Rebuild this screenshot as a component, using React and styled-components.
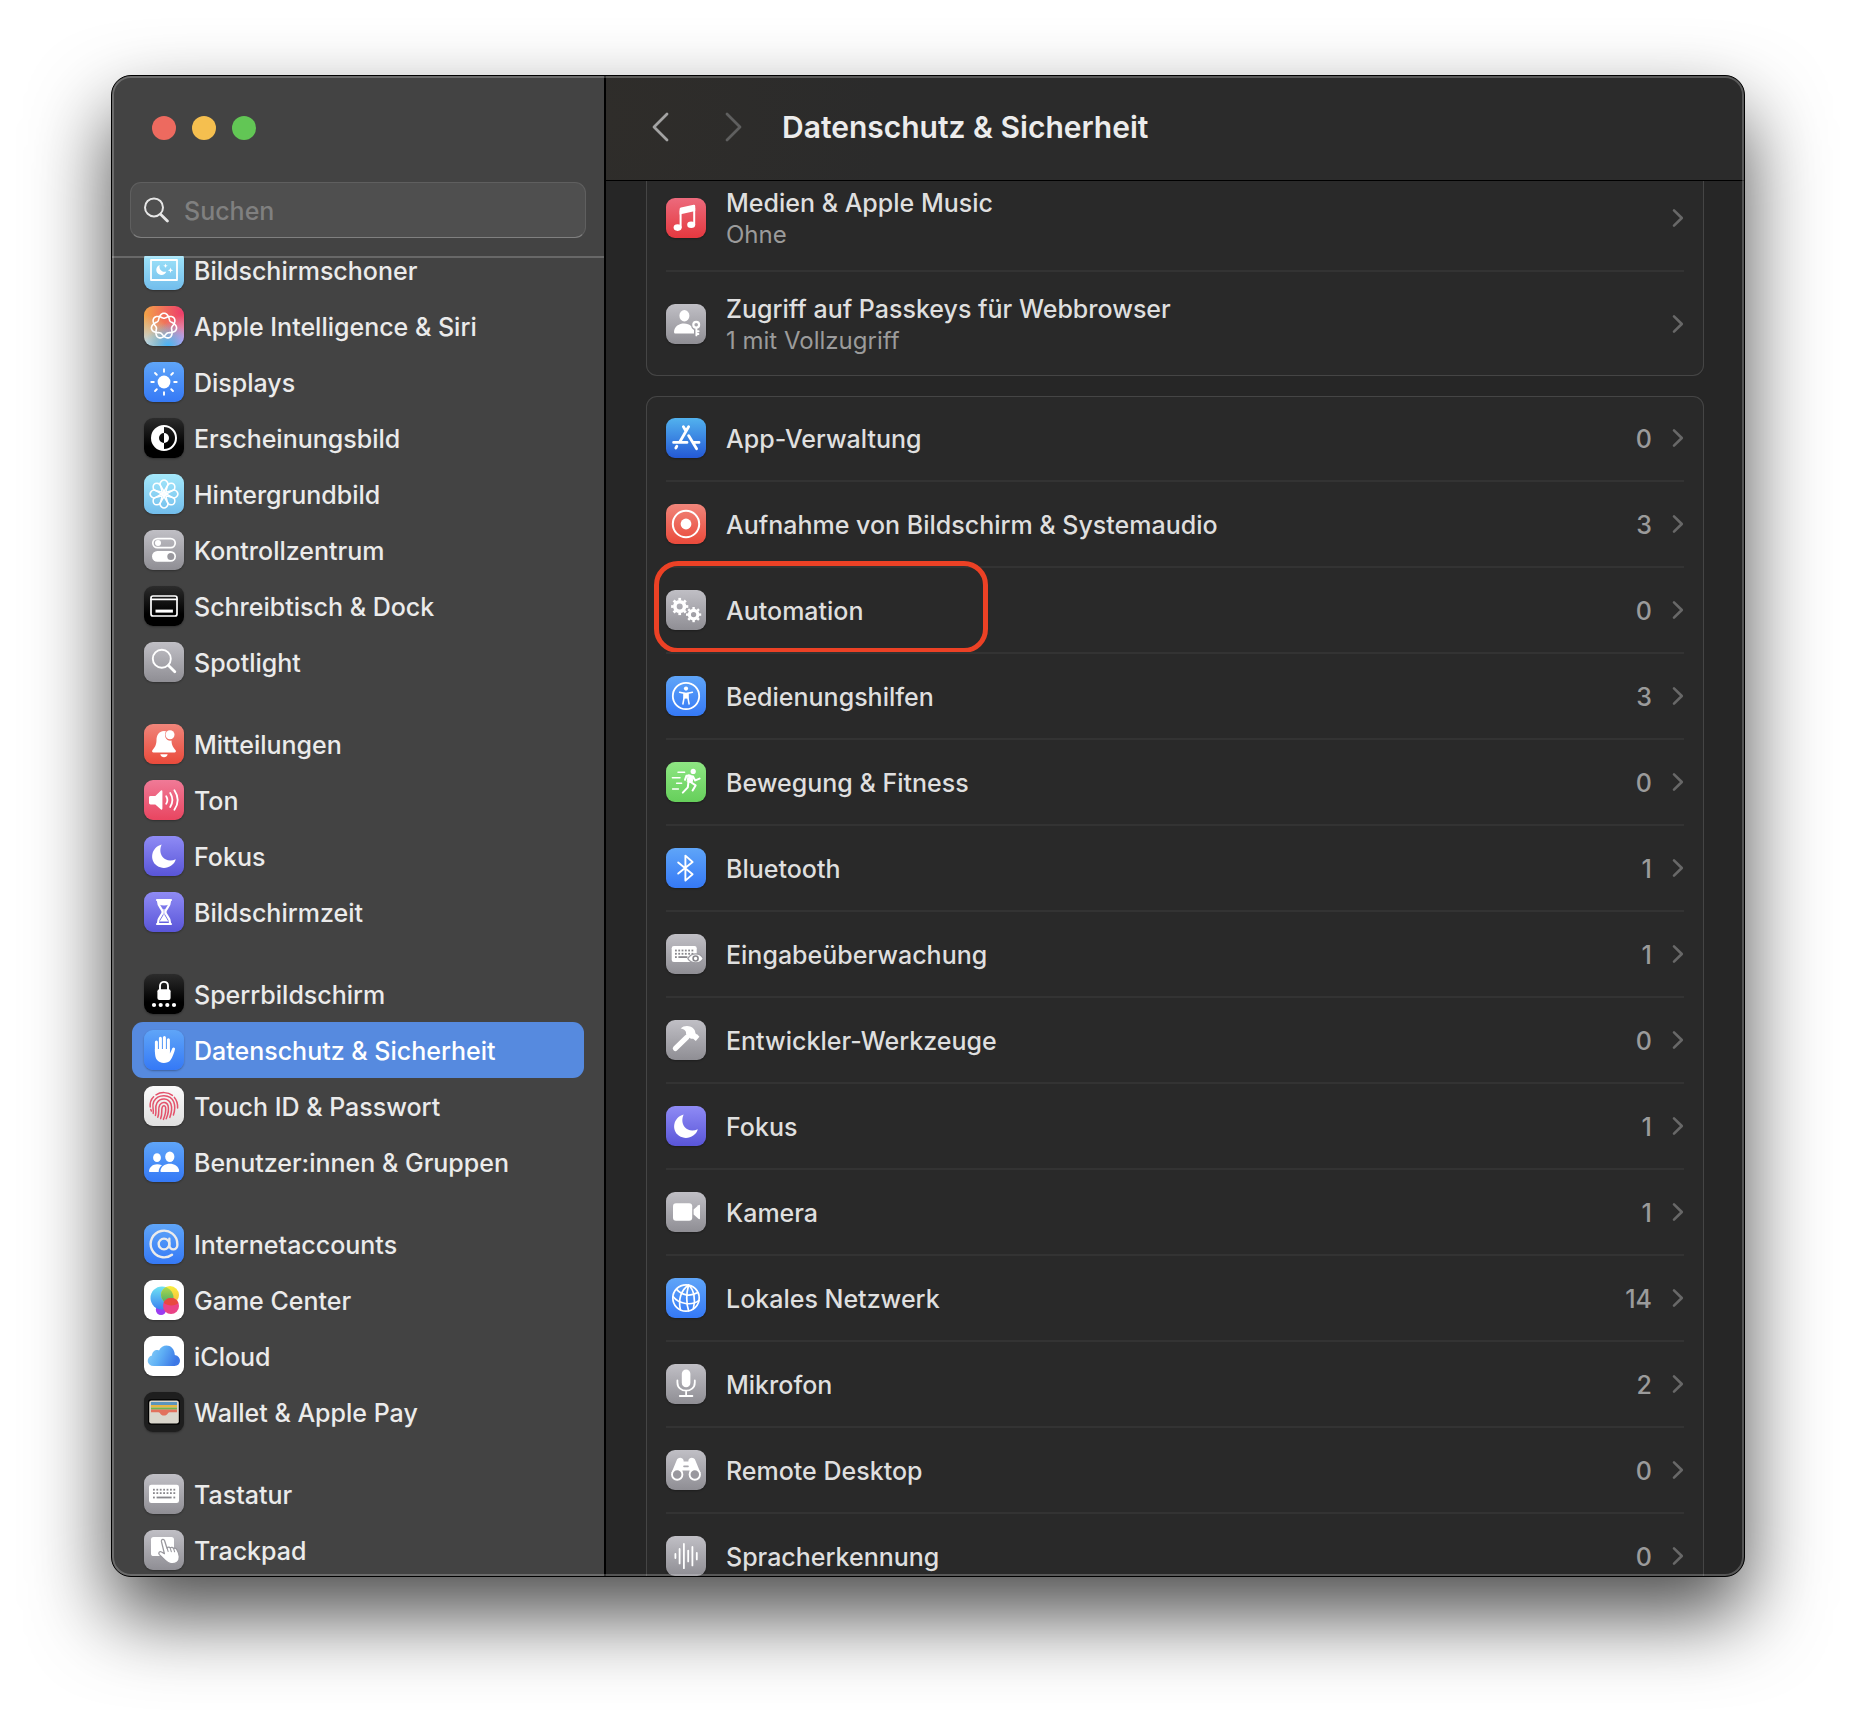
import React from "react";
import styled, { createGlobalStyle, ThemeProvider } from "styled-components";
import { AtSign } from "lucide-react";
import { IoFingerPrint } from "react-icons/io5";

const theme = {
  color: {
    sidebar: "#434343",
    header: "#2b2b2b",
    content: "#262626",
    card: "#292929",
    cardBorder: "#454545",
    divider: "#333333",
    selected: "#568adf",
    marker: "#ec4125",
    text: {
      sidebar: "#ebebeb",
      main: "#dfdfdf",
      secondary: "#9b9b9b",
      placeholder: "#808080",
      white: "#ffffff"
    }
  },
  font: `Inter, "Liberation Sans", sans-serif`
};

const tints = {
  blue: "linear-gradient(#5fa5f8, #3579f6)",
  sky: "linear-gradient(#a5e9fb, #72bdec)",
  gray: "linear-gradient(#c0bfc5, #8f8e94)",
  black: "linear-gradient(#2c2c2c, #000000 70%)",
  red: "linear-gradient(#f0857a, #ea4a3b)",
  pink: "linear-gradient(#f07a97, #e94560)",
  music: "linear-gradient(#ec6a7c, #e5383f)",
  indigo: "linear-gradient(#8f8bf5, #5955d8)",
  green: "linear-gradient(#8ee683, #66cf5b)",
  store: "linear-gradient(#52b2ee, #2459d6)",
  light: "linear-gradient(#fbfbfb, #dfdfdf)",
  white: "#ffffff",
  wallet: "#1e1e1e",
  siri:
    "radial-gradient(circle at 60% 100%, #45b4f8, transparent 50%), radial-gradient(circle at 0% 100%, #b9dcf2, transparent 55%), radial-gradient(circle at 100% 90%, #d49bfa, transparent 50%), radial-gradient(circle at 95% 15%, #ee3d6c, transparent 75%), #f3a547"
};

const GlobalStyle = createGlobalStyle`
  * {
    box-sizing: border-box;
  }

  body {
    margin: 0;
    background: #ffffff;
    font-family: ${theme.font};
    font-size: 25px;
    font-weight: 500;
  }
`;

const Desktop = styled("div")`
  display: flex;
  height: 100vh;
  min-height: 600px;
  padding: 75px 111px 147px;
`;

const Window = styled("main")(
  ({ theme }) => `
  position: relative;
  display: flex;
  flex: 1;
  min-width: 0;
  overflow: hidden;
  border: 1px solid #000000;
  border-radius: 20px;
  background: ${theme.color.content};
  box-shadow: 0 38px 80px rgba(0, 0, 0, 0.7);

  &::after {
    content: "";
    position: absolute;
    inset: 0;
    border: 2px solid rgba(255, 255, 255, 0.22);
    border-radius: 19px;
    pointer-events: none;
  }
`
);

const Sidebar = styled("nav")(
  ({ theme }) => `
  display: flex;
  flex-direction: column;
  flex: none;
  width: 494px;
  border-right: 2px solid #000000;
  background: ${theme.color.sidebar};
`
);

const TrafficLights = styled("div")`
  display: flex;
  gap: 16px;
  padding: 40px 40px 42px;
`;

const TrafficLight = styled("button")(
  ({ tint }) => `
  width: 24px;
  height: 24px;
  padding: 0;
  border: 0;
  border-radius: 50%;
  background: ${tint};
`
);

const SearchField = styled("label")`
  display: flex;
  align-items: center;
  gap: 15px;
  height: 56px;
  margin: 0 18px 18px;
  padding: 0 13px;
  border: 1px solid #5f5f5f;
  border-bottom-color: #808080;
  border-radius: 11px;
  background: #4f4f4f;
`;

const SearchInput = styled("input")(
  ({ theme }) => `
  flex: 1;
  min-width: 0;
  padding: 2px 0 0;
  border: 0;
  outline: 0;
  background: transparent;
  color: ${theme.color.text.sidebar};
  font: inherit;

  &::placeholder {
    color: ${theme.color.text.placeholder};
    opacity: 1;
  }
`
);

const SidebarScroll = styled("div")`
  position: relative;
  flex: 1;
  min-height: 0;
  overflow: hidden;

  &::before {
    content: "";
    position: absolute;
    z-index: 1;
    top: 0;
    left: 0;
    right: 0;
    height: 2px;
    background: rgba(255, 255, 255, 0.2);
  }
`;

const SidebarGroups = styled("div")`
  display: flex;
  flex-direction: column;
  gap: 26px;
  margin-top: -14px;
  padding: 0 20px;
`;

const List = styled("ul")`
  margin: 0;
  padding: 0;
  list-style: none;
`;

const SidebarLink = styled("a")(
  ({ theme, $selected }) => `
  display: flex;
  align-items: center;
  gap: 10px;
  height: 56px;
  padding: 0 12px;
  border-radius: 11px;
  background: ${$selected ? theme.color.selected : "transparent"};
  color: ${$selected ? theme.color.text.white : theme.color.text.sidebar};
  text-decoration: none;
  white-space: nowrap;
`
);

const SidebarLabel = styled("span")`
  padding-top: 2px;
  line-height: 32px;
`;

const Tile = styled("span")(
  ({ $tint }) => `
  flex: none;
  width: 40px;
  height: 40px;
  border-radius: 9px;
  background: ${tints[$tint]};
  box-shadow: 0 1px 2px rgba(0, 0, 0, 0.3);

  svg {
    display: block;
  }
`
);

const Pane = styled("section")`
  display: flex;
  flex-direction: column;
  flex: 1;
  min-width: 0;
`;

const Header = styled("header")(
  ({ theme }) => `
  display: flex;
  align-items: center;
  gap: 32px;
  flex: none;
  height: 105px;
  padding: 0 38px 2px;
  border-bottom: 1px solid #000000;
  background: radial-gradient(circle at 0 40%, #2f2d2a, ${theme.color.header} 280px);
`
);

const HeaderNav = styled("div")`
  display: flex;
  gap: 42px;
`;

const NavButton = styled("button")`
  display: flex;
  align-items: center;
  justify-content: center;
  width: 32px;
  height: 48px;
  padding: 0;
  border: 0;
  background: none;
  color: #a3a3a3;

  &:disabled {
    color: #5f5f5f;
  }
`;

const Title = styled("h1")`
  margin: 0;
  color: #ececec;
  font-size: 30px;
  font-weight: 600;
  white-space: nowrap;
`;

const PaneScroll = styled("div")`
  flex: 1;
  min-height: 0;
  overflow: hidden;
`;

const Cards = styled("div")`
  display: flex;
  flex-direction: column;
  gap: 20px;
  margin-top: -15px;
  padding: 0 40px;
`;

const Card = styled(List)(
  ({ theme }) => `
  padding: 0 20px;
  border-radius: 11px;
  background: ${theme.color.card};
  box-shadow: inset 0 0 0 1px ${theme.color.cardBorder};
`
);

const CardItem = styled("li")(
  ({ theme }) => `
  position: relative;

  & + & {
    border-top: 2px solid ${theme.color.divider};
  }
`
);

const RowButton = styled("button")(
  ({ theme, $tall }) => `
  display: flex;
  align-items: center;
  gap: 20px;
  width: 100%;
  height: ${$tall ? 104 : 84}px;
  padding: 0;
  border: 0;
  background: none;
  color: ${theme.color.text.main};
  font: inherit;
  text-align: left;
`
);

const RowText = styled("span")`
  display: flex;
  flex-direction: column;
  flex: 1;
  min-width: 0;
  padding-top: 2px;
  line-height: 32px;
`;

const RowDetail = styled("span")(
  ({ theme }) => `
  color: ${theme.color.text.secondary};
  font-size: 24px;
  font-weight: 400;
`
);

const RowCount = styled("span")(
  ({ theme }) => `
  padding-top: 2px;
  color: ${theme.color.text.secondary};
  line-height: 32px;
`
);

const Marker = styled("span")(
  ({ theme }) => `
  position: absolute;
  top: -7px;
  bottom: -1px;
  left: -12px;
  width: 334px;
  border: 5px solid ${theme.color.marker};
  border-radius: 24px;
  pointer-events: none;
`
);

const around = (count, draw) =>
  Array.from({ length: count }, (_, i) => draw((i * 360) / count));

// two strands weaving around a ring, seven lobes in total
const knotPath = () => {
  const steps = 280;
  const points = Array.from({ length: steps }, (_, i) => {
    const t = (i / steps) * Math.PI * 4;
    const r = 10.3 + 2.5 * Math.cos(3.5 * t);
    const x = 20 + r * Math.sin(t);
    const y = 20 - r * Math.cos(t);
    return `${x.toFixed(2)} ${y.toFixed(2)}`;
  });
  return `M${points.join("L")}Z`;
};

const Gear = ({ x, y, r }) => (
  <g transform={`translate(${x} ${y})`}>
    <circle r={r * 0.56} fill="none" strokeWidth={r * 0.42} />
    {around(8, angle => (
      <path
        key={angle}
        d={`M0 ${-r * 0.7}V${-r}`}
        strokeWidth={r * 0.32}
        strokeLinecap="butt"
        transform={`rotate(${angle})`}
      />
    ))}
  </g>
);

const Keys = ({ x, y, columns, rows, step }) =>
  Array.from({ length: columns * rows }, (_, i) => (
    <rect
      key={i}
      x={x + (i % columns) * step}
      y={y + Math.floor(i / columns) * step}
      width="1.8"
      height="1.8"
      fill="#88878c"
      stroke="none"
    />
  ));

const moon =
  "M17.6 8.6C7 11.5 5.2 24.5 13 29.8C20 34.4 29.6 31 31.8 23.2C27 25.4 21.6 24.8 18.6 21C15.8 17.4 15.8 13 17.6 8.6Z";

const glyphs = {
  screensaver: (
    <>
      <rect x="7" y="10" width="26" height="20" fill="none" strokeWidth="1.8" />
      <path
        d="M15.7 15C11.5 16.5 11.3 21.8 14.5 24C17.6 26 21.3 24.6 22.3 21.5C18 23 14.5 19 15.7 15Z"
        stroke="none"
      />
      <path
        d="M21.5 13.5l.6 1.7 1.7.6-1.7.6-.6 1.7-.6-1.7-1.7-.6 1.7-.6zM26.5 17.5l.7 2 2 .7-2 .7-.7 2-.7-2-2-.7 2-.7z"
        stroke="none"
      />
    </>
  ),
  siri: <path d={knotPath()} fill="none" strokeWidth="1.6" />,
  sun: (
    <>
      <circle cx="20" cy="20" r="6.4" stroke="none" />
      {around(8, angle => (
        <path
          key={angle}
          d="M20 7.3V9.8"
          strokeWidth="1.9"
          transform={`rotate(${angle} 20 20)`}
        />
      ))}
    </>
  ),
  appearance: (
    <>
      <circle cx="20" cy="20" r="12" fill="none" strokeWidth="2" />
      <path d="M20 8A12 12 0 0 0 20 32V25A5 5 0 0 1 20 15Z" stroke="none" />
      <path d="M20 15A5 5 0 0 1 20 25Z" stroke="none" />
    </>
  ),
  flower: (
    <g fill="none" strokeWidth="1.5">
      {around(8, angle => (
        <path
          key={angle}
          d="M20.9 19L16.9 12.2A3.8 3.8 0 1 1 23.1 12.2L19.1 19"
          transform={`rotate(${angle} 20 20)`}
        />
      ))}
    </g>
  ),
  toggles: (
    <>
      <rect x="8.8" y="8.6" width="22.4" height="9" rx="4.5" fill="none" strokeWidth="1.7" />
      <circle cx="14" cy="13.1" r="3" stroke="none" />
      <rect x="8" y="21" width="24" height="10.8" rx="5.4" stroke="none" />
      <circle cx="26.8" cy="26.4" r="3.5" fill="#99989e" stroke="none" />
    </>
  ),
  dock: (
    <>
      <rect x="7" y="10" width="26" height="20" rx="2" fill="none" strokeWidth="1.7" />
      <path d="M7 13.3H33" strokeWidth="1.7" />
      <rect x="11.5" y="23.6" width="17.4" height="3" stroke="none" />
    </>
  ),
  magnifier: (
    <>
      <circle cx="17.8" cy="16.8" r="9" fill="none" strokeWidth="1.9" />
      <path d="M24.5 23.5L30.8 29.8" strokeWidth="2.8" />
    </>
  ),
  bell: (
    <>
      <path
        d="M20 7C14.5 7.4 12.6 11.4 12.5 16C12.4 21.5 10.5 23.5 8.4 26.2C7.7 27.4 8.2 28.5 9.5 28.5H30.5C31.8 28.5 32.3 27.4 31.6 26.2C29.4 23.6 27.6 21.5 27.5 16.5C23 17.5 19 12.5 22 7.2Z"
        stroke="none"
      />
      <path d="M16.3 30.2H23.7C23 34.2 17 34.2 16.3 30.2Z" stroke="none" />
      <circle cx="26" cy="10.8" r="4.5" stroke="none" />
    </>
  ),
  sound: (
    <>
      <path
        d="M5 17.3Q5 16 6.5 16H11.3L17 10.6Q18.4 9.8 18.4 11.5V28.6Q18.4 30.3 17 29.4L11.3 24.4H6.5Q5 24.4 5 23Z"
        stroke="none"
      />
      <path
        d="M22.2 16.2Q24.6 20 22.2 23.8M26.2 13Q30.6 20 26.2 27M30.4 10.2Q37 20 30.4 29.8"
        fill="none"
        strokeWidth="1.8"
      />
    </>
  ),
  moon: <path d={moon} stroke="none" />,
  hourglass: (
    <>
      <path
        d="M13 8H27M13 32H27M14 9C14 15.5 18.6 16.5 18.6 20C18.6 23.5 14 24.5 14 31M26 9C26 15.5 21.4 16.5 21.4 20C21.4 23.5 26 24.5 26 31"
        fill="none"
        strokeWidth="2.2"
      />
      <path d="M14 8H26L25 12.5Q20 14.5 15 12.5ZM19.5 17H20.5V23L24.4 29.4H15.6L19.5 23Z" stroke="none" />
    </>
  ),
  lock: (
    <>
      <rect x="13.4" y="15.3" width="13.2" height="10.8" rx="2" stroke="none" />
      <path d="M16 16V12C16 6.5 24 6.5 24 12V16" fill="none" strokeWidth="1.9" />
      {[10, 16.7, 23.3, 30].map(cx => (
        <circle key={cx} cx={cx} cy="31" r="2.1" stroke="none" />
      ))}
    </>
  ),
  hand: (
    <>
      <path d="M12.4 12V22M16.4 8.2V20M20.4 7.4V20M24.4 9.8V21" strokeWidth="3" />
      <path
        d="M10.9 19H25.9V23.5C27 21.6 27.6 19.6 28.3 18.2C29.2 16.7 31.4 17.4 31 19.2C30.2 22.5 28.6 27.2 26.4 30.2C23.6 33.9 15.6 34 12.7 29.6C11.3 27.4 10.9 24.5 10.9 19Z"
        stroke="none"
      />
    </>
  ),
  // ridges of the print, from the outer arc to the core
  fingerprint: (
    <g fill="none" stroke="#e4526b" strokeWidth="1.5">
      <path d="M12 8.8C17 5.6 24 6 28.4 9.4M30.4 11.4C33 14.4 33.8 18 33.6 22M9.6 10.8C6.8 13.6 5.8 17 6.2 21M6.8 23.4L7.4 25" />
      <path d="M9.2 27.4C10 23 7.4 20 9.8 15.4C14 7.6 26.4 7.8 29.8 16C31.4 20.4 30.8 25 29.4 29" />
      <path d="M11.4 29.4C13 24.6 10.4 21 13 16.8C16.6 11.4 24.4 12 26.8 17.6C28.4 22.4 27.4 27.4 25.8 31.4" />
      <path d="M13.8 31.2C15.8 26.4 13.6 22.6 15.8 18.8C18.2 15.2 22.8 16 24 19.4C25.2 24 24 28.6 22.2 32.8" />
      <path d="M16.6 32.6C18.8 28 17 24.4 18.2 21.2C19 19 21.2 19.4 21.6 21.4C22.2 25.6 21 29.6 19.4 33.4" />
    </g>
  ),
  users: (
    <>
      <ellipse cx="13" cy="15.7" rx="3.9" ry="4.4" stroke="none" />
      <path d="M18 23.3C11.5 20.3 5.6 23.6 5 29C5 29.8 5.4 30 6 30H14.7C14.6 27.2 15.8 25 18 23.3Z" stroke="none" />
      <ellipse cx="25.8" cy="14.8" rx="4.6" ry="5.2" stroke="none" />
      <path d="M16.4 29C17.6 19.4 34 19.4 35.2 29Q35.2 30 34.2 30H17.4Q16.4 30 16.4 29Z" stroke="none" />
    </>
  ),
  at: <AtSign x="4" y="4" size={32} fill="none" strokeWidth={1.8} />,
  gameCenter: (
    <g stroke="none">
      <defs>
        <linearGradient id="gc-blue" x1="0" y1="0" x2="0" y2="1">
          <stop offset="0" stopColor="#6fe3f4" />
          <stop offset="1" stopColor="#3b82f0" />
        </linearGradient>
        <linearGradient id="gc-yellow" x1="0" y1="0" x2="0" y2="1">
          <stop offset="0" stopColor="#f9ee3d" />
          <stop offset="1" stopColor="#f4b73c" />
        </linearGradient>
        <linearGradient id="gc-green" x1="0" y1="0" x2="0" y2="1">
          <stop offset="0" stopColor="#b5dc4b" />
          <stop offset="1" stopColor="#44a868" />
        </linearGradient>
        <clipPath id="gc-clip">
          <circle cx="18" cy="18" r="11.5" />
        </clipPath>
      </defs>
      <circle cx="17" cy="29.7" r="5.2" fill="#9a3cf0" />
      <circle cx="18" cy="18" r="11.5" fill="url(#gc-blue)" />
      <circle cx="26" cy="15" r="9" fill="url(#gc-yellow)" />
      <circle cx="26" cy="15" r="9" fill="url(#gc-green)" clipPath="url(#gc-clip)" />
      <circle cx="27" cy="26" r="8" fill="#ea4386" />
      <path d="M19.6 22.8A8 8 0 0 1 34.4 23C31.5 26 24 26.5 19.6 22.8Z" fill="#e8483f" />
    </g>
  ),
  cloud: (
    <g stroke="none">
      <defs>
        <linearGradient id="cloud-fill" x1="0" y1="0" x2="1" y2="0.3">
          <stop offset="0" stopColor="#8fd3f7" />
          <stop offset="0.5" stopColor="#5fb0f5" />
          <stop offset="1" stopColor="#3d78e6" />
        </linearGradient>
      </defs>
      <path
        d="M10 30C2 30 2 20.6 8 19.4C8 15 12.2 13 15 14.4C19 6.4 30.6 8.4 30.8 19C38 20 37.6 30 30.5 30Z"
        fill="url(#cloud-fill)"
      />
    </g>
  ),
  wallet: (
    <g stroke="none">
      <rect x="4" y="7.3" width="32" height="25.4" rx="3" fill="#000000" />
      <rect x="5.2" y="8.6" width="29.6" height="22.8" rx="2.2" fill="#dad6cc" />
      <path d="M7 10H33V13H7Z" fill="#5b94bd" />
      <path d="M7 13H33V15.6H7Z" fill="#e9b543" />
      <path d="M7 15.6H33V17.6H7Z" fill="#6fb452" />
      <path d="M7 17.6H33V20.2H25.5C23.5 20.2 24 23.6 20 23.6C16 23.6 16.5 20.2 14.5 20.2H7Z" fill="#e2715d" />
    </g>
  ),
  keyboard: (
    <>
      <rect x="5" y="10.7" width="30" height="18.4" rx="2.4" stroke="none" />
      <Keys x={9} y={14.8} columns={7} rows={2} step={3.4} />
      <Keys x={9} y={22.6} columns={1} rows={1} step={3.4} />
      <rect x="12.6" y="22.6" width="15" height="1.8" fill="#88878c" stroke="none" />
      <Keys x={29.4} y={22.6} columns={1} rows={1} step={3.4} />
    </>
  ),
  trackpad: (
    <>
      <rect x="7" y="7" width="23" height="19" rx="2.6" stroke="none" />
      <path
        d="M17.4 11.4C17 9.2 20 8.6 20.6 10.8L23 18.2C24 16.6 25.6 17 26.2 18C27.4 16.8 29 17.4 29.6 18.6C31 17.6 32.6 18.4 33 20C35.6 24 36.6 30 33 32.2C29 35 24.4 33.6 21.6 30.6L15.4 24.6C13.8 22.6 15.8 20.8 17.6 22L20.4 23.6Z"
        stroke="#99989e"
        strokeWidth="1.3"
      />
      <path d="M23.2 18.4l.9 3M26.4 18.6l.9 3M29.8 19.2l.8 2.6" stroke="#99989e" strokeWidth="1.1" />
    </>
  ),
  music: (
    <>
      <path d="M13.6 11.3Q13.6 9.8 15 9.5L27.6 6.7Q29.2 6.5 29.2 8V13L13.6 16.4Z" stroke="none" />
      <path d="M14.6 13V29.4M28.2 10V26.6" strokeWidth="2" />
      <ellipse cx="11.6" cy="29.6" rx="4" ry="3.3" stroke="none" />
      <ellipse cx="25.2" cy="26.8" rx="4" ry="3.3" stroke="none" />
    </>
  ),
  passkey: (
    <>
      <ellipse cx="18.4" cy="11.8" rx="5" ry="5.7" stroke="none" />
      <path d="M8 28C8.4 18.6 21 17.6 25.2 22.2C25.4 24 26.6 25.2 28 26V29.6H9.2Q8 29.6 8 28Z" stroke="none" />
      <circle cx="30.2" cy="20.8" r="2.9" fill="none" strokeWidth="2.2" />
      <path d="M30.4 24V31.4M31 27.3H32.6M31 30H32.4" strokeWidth="1.9" />
    </>
  ),
  appStore: (
    <path
      d="M22.6 8.8L13.6 24.2M17.4 8.8L19.6 12.4M22.6 17.6L30.6 30.8M7.6 24.4H21M27 24.4H33M10.8 28.2L9.8 30"
      fill="none"
      strokeWidth="2.8"
    />
  ),
  record: (
    <>
      <circle cx="20" cy="20" r="13.2" fill="none" strokeWidth="2" />
      <circle cx="20" cy="20" r="5.4" stroke="none" />
    </>
  ),
  gears: (
    <>
      <Gear x={13.7} y={16.5} r={8.6} />
      <Gear x={27.6} y={24.6} r={7.6} />
    </>
  ),
  accessibility: (
    <>
      <circle cx="20" cy="20" r="13.2" fill="none" strokeWidth="1.8" />
      <circle cx="20" cy="12.6" r="2.1" stroke="none" />
      <path d="M13.6 16.3L18.2 17.2V21L16.9 28M26.4 16.3L21.8 17.2V21L23.1 28" fill="none" strokeWidth="1.5" />
      <path d="M17.4 16.6H22.6V22.6H17.4Z" stroke="none" />
    </>
  ),
  runner: (
    <>
      <circle cx="27.2" cy="9.4" r="2.6" stroke="none" />
      <path d="M22.4 13L27.4 14.2L26 20.6L21.6 20Z" strokeWidth="1" />
      <path
        d="M24 13.4L20.4 13.8L19 17.8M27 14.6L29.2 18.4L33.6 16.6M24.6 20L29.6 23.4L26.6 28.4M22.4 20.4L21.8 25.4L16.8 30.6"
        fill="none"
        strokeWidth="2"
      />
      <path d="M12 10.2H18.6M6.4 15.8H14M10.6 21.3H15.6M6.6 27H12.4" strokeWidth="1.5" />
    </>
  ),
  bluetooth: <path d="M12.2 14.4L26.6 26.2L19.4 32.6V7.6L26.6 14L12.2 25.6" fill="none" strokeWidth="1.9" />,
  keyboardEye: (
    <>
      <rect x="5.7" y="12" width="25" height="16" rx="2.2" stroke="none" />
      <Keys x={9} y={15.6} columns={6} rows={2} step={3.3} />
      <Keys x={9} y={22.2} columns={1} rows={1} step={3.3} />
      <rect x="12.4" y="22.2" width="9" height="1.8" fill="#88878c" stroke="none" />
      <path
        d="M21.8 24.6C25.6 18.4 34.2 18.4 37.2 24.6C34.2 30.2 25.6 30.2 21.8 24.6Z"
        stroke="#9b9aa0"
        strokeWidth="1.2"
      />
      <circle cx="29.6" cy="24.5" r="2.5" fill="none" stroke="#88878c" strokeWidth="1.6" />
    </>
  ),
  hammer: (
    <>
      <path d="M9.4 28.4L21 17.2" strokeWidth="5.2" />
      <path
        d="M14.6 8.6C18 5 25 5.4 28 9.2C29.6 11 28.8 12.8 30 14L31.4 14.4L33.4 16.8L29.8 21L27.2 18.8C26 18.6 24.4 18.8 23 17.4L20 14.2C20.6 11.4 18.6 9 14.6 8.6Z"
        stroke="none"
      />
    </>
  ),
  camera: (
    <>
      <rect x="7" y="11.2" width="19.2" height="17.6" rx="3" stroke="none" />
      <path d="M27.6 17.4L32.4 13.2Q34 12.2 34 13.8V26.2Q34 27.8 32.4 26.8L27.6 22.6Z" stroke="none" />
    </>
  ),
  globe: (
    <g fill="none" strokeWidth="1.7">
      <circle cx="20" cy="20" r="13.2" />
      <path d="M22.6 7C15 12 12 22 14.4 31.6M22.6 7C20.4 15 20.2 25 22.6 32.8M22.6 7C28 12 29.8 21 27.4 30.4" />
      <path d="M10.6 11.4C16 17.4 24 18.8 31.8 14.6M7 18.6C13 26.4 26 28 33 22.4" />
    </g>
  ),
  microphone: (
    <>
      <rect x="15.8" y="5.4" width="8.6" height="17.8" rx="4.3" stroke="none" />
      <path d="M11.4 16.4V18.4C11.4 29.4 28.8 29.4 28.8 18.4V16.4M20.1 27V32M13.8 32H26.4" fill="none" strokeWidth="1.8" />
    </>
  ),
  binoculars: (
    <>
      <path
        d="M5.4 23L10.6 10.4C11.4 7 17 7 17.6 10.4V11.4H22.4V10.4C23 7 28.6 7 29.4 10.4L34.6 23L23.6 26V20.4H16.4V26Z"
        stroke="none"
      />
      <path d="M18 16.4H22" stroke="#a9a8ae" strokeWidth="1.6" />
      <circle cx="11.2" cy="24.6" r="5.2" fill="#99989e" strokeWidth="1.9" />
      <circle cx="28.8" cy="24.6" r="5.2" fill="#99989e" strokeWidth="1.9" />
    </>
  ),
  waveform: (
    <path
      d="M9.4 18V22M13.6 13V27.4M17.9 8V32.2M22.2 14.6V25.4M26.4 11V29.4M30.8 16.8V23.4"
      strokeWidth="1.8"
    />
  )
};

const sidebarGroups = [
  [
    { label: "Bildschirmschoner", icon: "screensaver", tint: "sky" },
    { label: "Apple Intelligence & Siri", icon: "siri", tint: "siri" },
    { label: "Displays", icon: "sun", tint: "blue" },
    { label: "Erscheinungsbild", icon: "appearance", tint: "black" },
    { label: "Hintergrundbild", icon: "flower", tint: "sky" },
    { label: "Kontrollzentrum", icon: "toggles", tint: "gray" },
    { label: "Schreibtisch & Dock", icon: "dock", tint: "black" },
    { label: "Spotlight", icon: "magnifier", tint: "gray" }
  ],
  [
    { label: "Mitteilungen", icon: "bell", tint: "red" },
    { label: "Ton", icon: "sound", tint: "pink" },
    { label: "Fokus", icon: "moon", tint: "indigo" },
    { label: "Bildschirmzeit", icon: "hourglass", tint: "indigo" }
  ],
  [
    { label: "Sperrbildschirm", icon: "lock", tint: "black" },
    { label: "Datenschutz & Sicherheit", icon: "hand", tint: "blue", selected: true },
    { label: "Touch ID & Passwort", icon: "fingerprint", tint: "light" },
    { label: "Benutzer:innen & Gruppen", icon: "users", tint: "blue" }
  ],
  [
    { label: "Internetaccounts", icon: "at", tint: "blue" },
    { label: "Game Center", icon: "gameCenter", tint: "white" },
    { label: "iCloud", icon: "cloud", tint: "white" },
    { label: "Wallet & Apple Pay", icon: "wallet", tint: "wallet" }
  ],
  [
    { label: "Tastatur", icon: "keyboard", tint: "gray" },
    { label: "Trackpad", icon: "trackpad", tint: "gray" }
  ]
];

const cards = [
  [
    { label: "Medien & Apple Music", detail: "Ohne", icon: "music", tint: "music" },
    {
      label: "Zugriff auf Passkeys für Webbrowser",
      detail: "1 mit Vollzugriff",
      icon: "passkey",
      tint: "gray"
    }
  ],
  [
    { label: "App-Verwaltung", count: 0, icon: "appStore", tint: "store" },
    { label: "Aufnahme von Bildschirm & Systemaudio", count: 3, icon: "record", tint: "red" },
    { label: "Automation", count: 0, icon: "gears", tint: "gray", marked: true },
    { label: "Bedienungshilfen", count: 3, icon: "accessibility", tint: "blue" },
    { label: "Bewegung & Fitness", count: 0, icon: "runner", tint: "green" },
    { label: "Bluetooth", count: 1, icon: "bluetooth", tint: "blue" },
    { label: "Eingabeüberwachung", count: 1, icon: "keyboardEye", tint: "gray" },
    { label: "Entwickler-Werkzeuge", count: 0, icon: "hammer", tint: "gray" },
    { label: "Fokus", count: 1, icon: "moon", tint: "indigo" },
    { label: "Kamera", count: 1, icon: "camera", tint: "gray" },
    { label: "Lokales Netzwerk", count: 14, icon: "globe", tint: "blue" },
    { label: "Mikrofon", count: 2, icon: "microphone", tint: "gray" },
    { label: "Remote Desktop", count: 0, icon: "binoculars", tint: "gray" },
    { label: "Spracherkennung", count: 0, icon: "waveform", tint: "gray" }
  ]
];

const AppIcon = ({ icon, tint }) => (
  <Tile $tint={tint} aria-hidden="true">
    <svg
      width="40"
      height="40"
      viewBox="0 0 40 40"
      fill="#ffffff"
      stroke="#ffffff"
      strokeLinecap="round"
      strokeLinejoin="round"
    >
      {glyphs[icon]}
    </svg>
  </Tile>
);

const Chevron = () => (
  <svg width="12" height="20" viewBox="0 0 12 20" fill="none" aria-hidden="true">
    <path
      d="M2 2.4L9.8 10L2 17.6"
      stroke="#686868"
      strokeWidth="2.6"
      strokeLinecap="round"
      strokeLinejoin="round"
    />
  </svg>
);

const Arrow = ({ d }) => (
  <svg width="20" height="32" viewBox="0 0 20 32" fill="none" aria-hidden="true">
    <path
      d={d}
      stroke="currentColor"
      strokeWidth="2.8"
      strokeLinecap="round"
      strokeLinejoin="round"
    />
  </svg>
);

const SettingsRow = ({ label, detail, count, icon, tint, marked }) => (
  <CardItem>
    <RowButton type="button" $tall={Boolean(detail)}>
      <AppIcon icon={icon} tint={tint} />
      <RowText>
        {label}
        {detail && <RowDetail>{detail}</RowDetail>}
      </RowText>
      {count !== undefined && <RowCount>{count}</RowCount>}
      <Chevron />
    </RowButton>
    {marked && <Marker />}
  </CardItem>
);

const App = () => (
  <ThemeProvider theme={theme}>
    <GlobalStyle />
    <Desktop>
      <Window>
        <Sidebar>
          <TrafficLights>
            <TrafficLight type="button" tint="#ed6a5f" aria-label="Schließen" />
            <TrafficLight type="button" tint="#f5bf4f" aria-label="Minimieren" />
            <TrafficLight type="button" tint="#62c655" aria-label="Vergrößern" />
          </TrafficLights>
          <SearchField>
            <svg width="25" height="26" viewBox="0 0 25 26" fill="none" stroke="#e6e6e6" aria-hidden="true">
              <circle cx="10" cy="10.4" r="9" strokeWidth="2" />
              <path d="M16.8 17.4L23.4 24" strokeWidth="2.8" strokeLinecap="round" />
            </svg>
            <SearchInput type="text" placeholder="Suchen" aria-label="Suchen" />
          </SearchField>
          <SidebarScroll>
            <SidebarGroups>
              {sidebarGroups.map(group => (
                <List key={group[0].label}>
                  {group.map(({ label, icon, tint, selected }) => (
                    <li key={label}>
                      <SidebarLink href="#" $selected={selected}>
                        <AppIcon icon={icon} tint={tint} />
                        <SidebarLabel>{label}</SidebarLabel>
                      </SidebarLink>
                    </li>
                  ))}
                </List>
              ))}
            </SidebarGroups>
          </SidebarScroll>
        </Sidebar>
        <Pane>
          <Header>
            <HeaderNav>
              <NavButton type="button" aria-label="Zurück">
                <Arrow d="M17 3L4 16L17 29" />
              </NavButton>
              <NavButton type="button" aria-label="Vorwärts" disabled>
                <Arrow d="M3 3L16 16L3 29" />
              </NavButton>
            </HeaderNav>
            <Title>Datenschutz & Sicherheit</Title>
          </Header>
          <PaneScroll>
            <Cards>
              {cards.map(rows => (
                <Card key={rows[0].label}>
                  {rows.map(row => (
                    <SettingsRow key={row.label} {...row} />
                  ))}
                </Card>
              ))}
            </Cards>
          </PaneScroll>
        </Pane>
      </Window>
    </Desktop>
  </ThemeProvider>
);

export default App;
